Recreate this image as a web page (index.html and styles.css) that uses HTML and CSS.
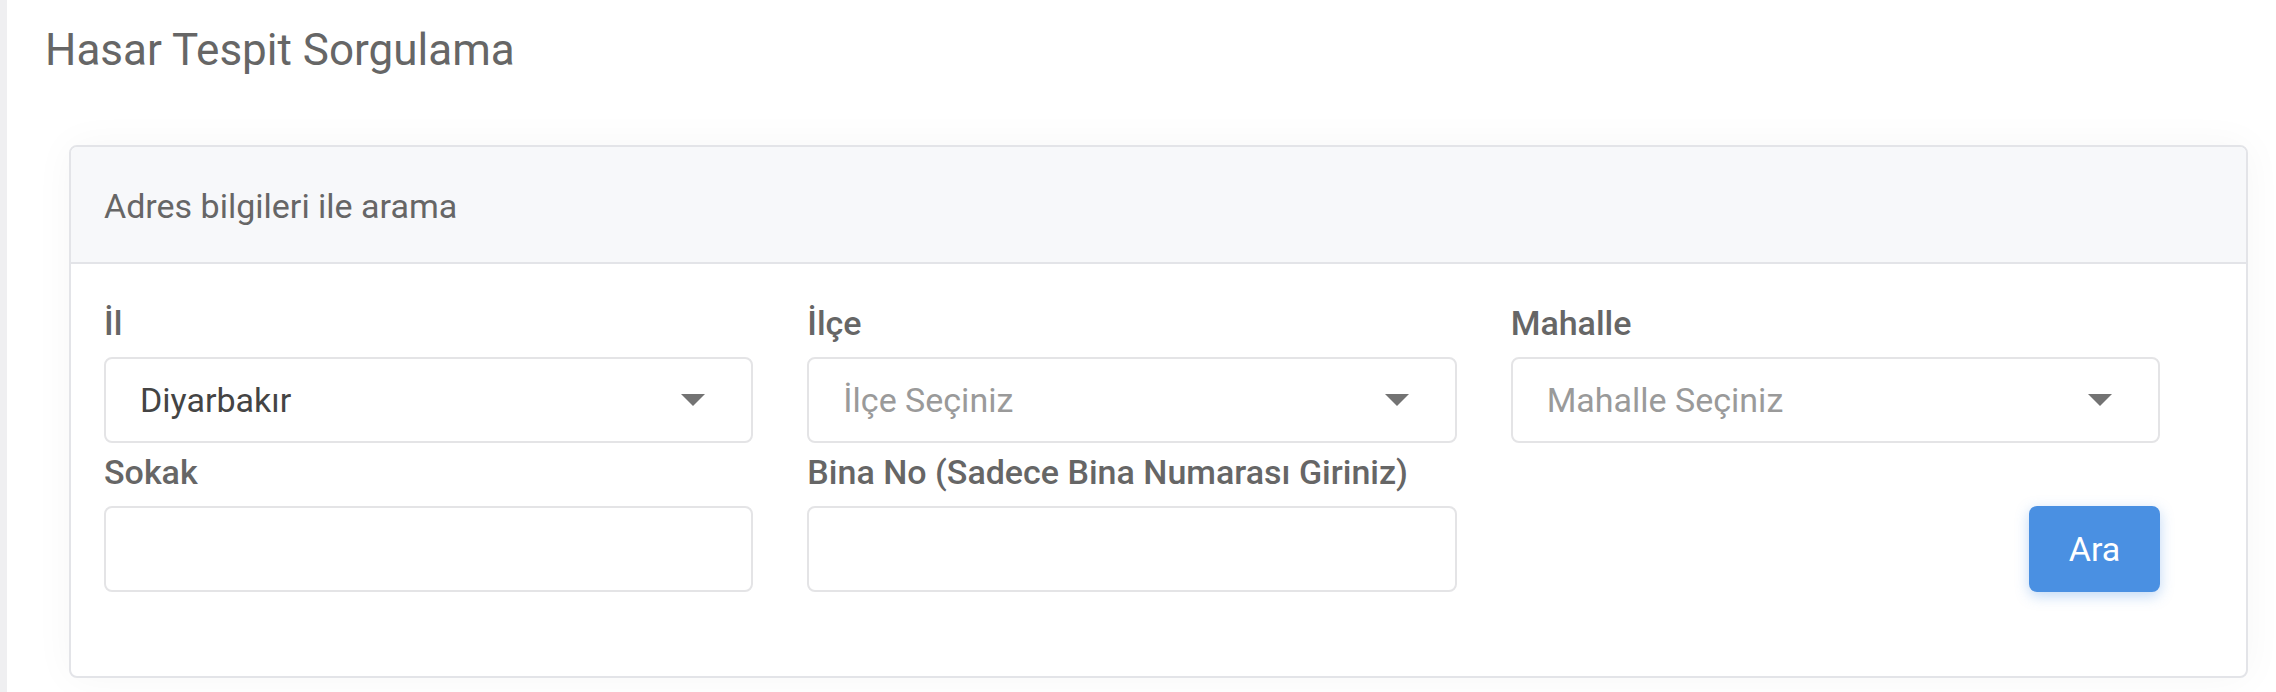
FILE: index.html
```html
<!DOCTYPE html>
<html lang="tr">
<head>
    <meta charset="UTF-8">
    <meta name="viewport" content="width=device-width, initial-scale=1.0">
    <title>Hasar Tespit Sorgulama</title>
    <link rel="stylesheet" href="styles.css">
</head>
<body>
    <div class="page">
        <h1 class="page-title">Hasar Tespit Sorgulama</h1>

        <!-- Address search card -->
        <div class="card">
            <div class="card-header">Adres bilgileri ile arama</div>
            <div class="card-body">
                <form class="form-grid" onsubmit="return false">
                    <div class="form-group">
                        <label>İl</label>
                        <div class="select">
                            <span class="select-value">Diyarbakır</span>
                            <span class="select-arrow"></span>
                        </div>
                    </div>
                    <div class="form-group">
                        <label>İlçe</label>
                        <div class="select">
                            <span class="select-value placeholder">İlçe Seçiniz</span>
                            <span class="select-arrow"></span>
                        </div>
                    </div>
                    <div class="form-group">
                        <label>Mahalle</label>
                        <div class="select">
                            <span class="select-value placeholder">Mahalle Seçiniz</span>
                            <span class="select-arrow"></span>
                        </div>
                    </div>
                    <div class="form-group">
                        <label for="sokak">Sokak</label>
                        <input type="text" id="sokak" class="input">
                    </div>
                    <div class="form-group">
                        <label for="bina-no">Bina No (Sadece Bina Numarası Giriniz)</label>
                        <input type="text" id="bina-no" class="input">
                    </div>
                    <div class="form-group form-actions">
                        <button type="submit" class="btn-primary">Ara</button>
                    </div>
                </form>
            </div>
        </div>
    </div>
</body>
</html>
```

FILE: styles.css
```css
* {
    margin: 0;
    padding: 0;
    box-sizing: border-box;
}
body {
    font-family: Roboto, 'Liberation Sans', sans-serif;
    background-color: #fff;
    color: #666;
}
.page {
    min-height: 100vh;
    border-left: 7px solid #efeff1;
    padding: 23px 28px 0 62px;
}
.page-title {
    font-size: 44px;
    font-weight: 400;
    line-height: 55px;
    color: #666;
    margin-left: -24px;
    margin-bottom: 67px;
}
.card {
    background-color: #fff;
    border: 2px solid #e3e4e8;
    border-radius: 8px;
    box-shadow: 0 0 40px rgba(0, 0, 0, 0.04);
    overflow: hidden;
}
.card-header {
    background-color: #f7f8fa;
    border-bottom: 2px solid #e3e4e8;
    padding: 34px 33px 31px;
    font-size: 34px;
    line-height: 50px;
    color: #666;
}
.card-body {
    padding: 35px 86px 84px 33px;
}
.form-grid {
    display: grid;
    grid-template-columns: repeat(3, 1fr);
    column-gap: 54px;
    row-gap: 5px;
}
.form-group label {
    display: block;
    font-size: 34px;
    font-weight: 500;
    line-height: 48px;
    color: #666;
    margin-bottom: 10px;
}
.select, .input {
    width: 100%;
    height: 86px;
    border: 2px solid #e4e4e6;
    border-radius: 8px;
    background-color: #fff;
}
.select {
    display: flex;
    align-items: center;
    justify-content: space-between;
    padding: 0 46px 0 34px;
}
.select-value {
    font-size: 34px;
    color: #444;
}
.select-value.placeholder {
    color: #9a9a9a;
}
.select-arrow {
    width: 0;
    height: 0;
    border-left: 12px solid transparent;
    border-right: 12px solid transparent;
    border-top: 12px solid #737373;
}
.input {
    padding: 0 34px;
    font-family: inherit;
    font-size: 34px;
    color: #444;
}
.input:focus {
    outline: none;
    border-color: #4a90e2;
}
.form-actions {
    display: flex;
    justify-content: flex-end;
    align-items: flex-end;
}
.btn-primary {
    width: 131px;
    height: 86px;
    border: none;
    border-radius: 8px;
    background-color: #4a90e2;
    color: #fff;
    font-family: inherit;
    font-size: 34px;
    cursor: pointer;
    box-shadow: 0 4px 14px rgba(74, 144, 226, 0.35);
}
.btn-primary:hover {
    background-color: #3c82d4;
}
```
